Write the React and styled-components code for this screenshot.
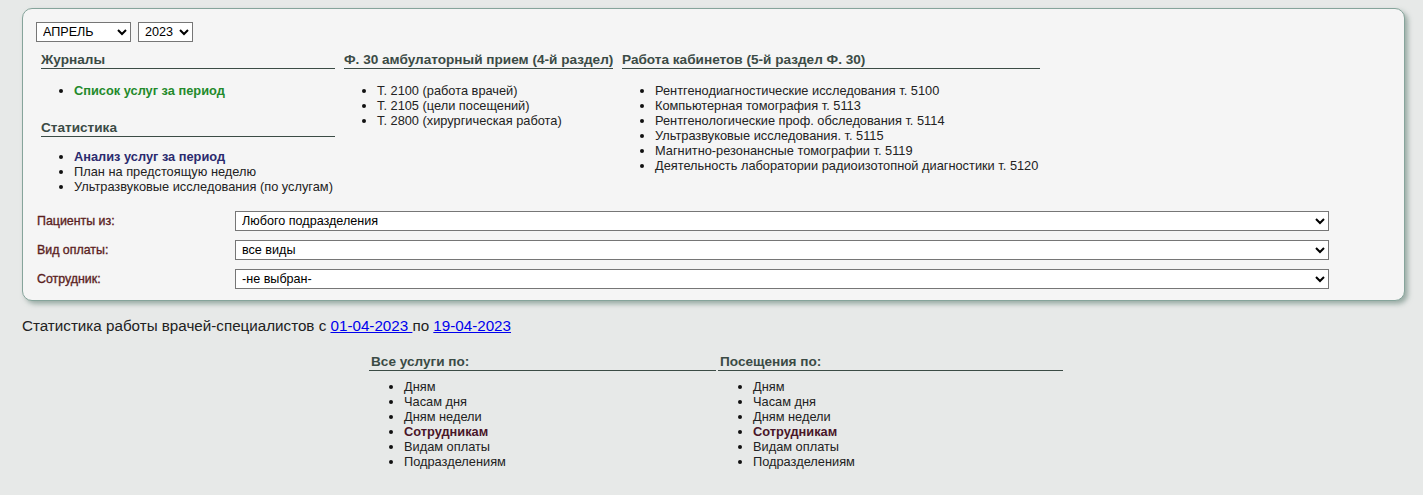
import styled, { createGlobalStyle } from "styled-components";

const GlobalStyle = createGlobalStyle`
  html, body {
    margin: 0;
    padding: 0;
    background: #e7e9e8;
    font-family: "Liberation Sans", Arial, sans-serif;
    font-size: 13px;
    color: #222;
  }
`;

//CSS
const Page = styled.div`
  padding: 8px 18px 20px 22px;
`;

const Panel = styled.div`
  background: #f5f5f5;
  border: 1px solid #86a49b;
  border-radius: 10px;
  box-shadow: 3px 3px 5px rgba(90, 120, 110, 0.55);
  padding: 13px 14px 11px 13px;
`;

const PeriodRow = styled.div`
  display: flex;
  gap: 7px;
`;

const Select = styled.select`
  font-family: "Liberation Sans", Arial, sans-serif;
  font-size: 12.6px;
  color: #000;
  height: 20px;
  width: ${(p) => p.$width || "auto"};
  padding: 0 2px;
  background: #fff;
  border: 1px solid #767676;
  border-radius: 0;
`;

const Sections = styled.div`
  display: grid;
  grid-template-columns: 294px 269px 418px;
  column-gap: 9px;
  margin: 9px 0 0 5px;
`;

const Column = styled.div`
  display: flex;
  flex-direction: column;
`;

const Heading = styled.div`
  font-weight: bold;
  font-size: 13.6px;
  color: #3b4b45;
  line-height: 15px;
  padding: 1px 0 1px ${(p) => p.$inset || "0"};
  border-bottom: 1px solid #3b4b45;
  white-space: nowrap;
  margin-top: ${(p) => p.$top || "0"};
`;

const List = styled.ul`
  margin: ${(p) => p.$gap || "14px"} 0 0;
  padding-left: ${(p) => p.$indent || "33px"};
  line-height: 15px;
  font-size: 12.8px;
  list-style: disc;
  li::marker {
    color: #111;
  }
`;

const Item = styled.li`
  white-space: nowrap;
  font-weight: ${(p) => (p.$bold ? "bold" : "normal")};
  color: ${(p) => p.$color || "#222"};
`;

const Filters = styled.div`
  display: grid;
  grid-template-columns: 198px 1094px;
  row-gap: 9px;
  align-items: center;
  margin: 17px 0 0 1px;
`;

const Label = styled.label`
  font-size: 12.4px;
  color: #5b1f1f;
  -webkit-text-stroke: 0.35px #5b1f1f;
`;

const Title = styled.div`
  margin-top: 16px;
  font-size: 15.2px;
  color: #222;
  a {
    color: #0000ee;
    text-decoration: underline;
  }
`;

const Reports = styled.div`
  display: grid;
  grid-template-columns: 347px 345px;
  column-gap: 2px;
  justify-content: center;
  padding-left: 5px;
  margin-top: 19px;
`;

const journals = [
  { text: "Список услуг за период", bold: true, color: "#238a2b" },
];

const Main = () => (
  <Page>
    <Panel>
      <PeriodRow>
        <Select $width="95px" defaultValue="4">
          <option value="1">ЯНВАРЬ</option>
          <option value="2">ФЕВРАЛЬ</option>
          <option value="3">МАРТ</option>
          <option value="4">АПРЕЛЬ</option>
          <option value="5">МАЙ</option>
        </Select>
        <Select $width="55px" defaultValue="2023">
          <option>2022</option>
          <option>2023</option>
        </Select>
      </PeriodRow>

      <Sections>
        <Column>
          <Heading>Журналы</Heading>
          <List>
            {journals.map((it) => (
              <Item key={it.text} $bold={it.bold} $color={it.color}>
                {it.text}
              </Item>
            ))}
          </List>
          <Heading $top="21px">Статистика</Heading>
          <List $gap="12px">
            <Item $bold $color="#2b2b6e">Анализ услуг за период</Item>
            <Item>План на предстоящую неделю</Item>
            <Item>Ультразвуковые исследования (по услугам)</Item>
          </List>
        </Column>
        <Column>
          <Heading>Ф. 30 амбулаторный прием (4-й раздел)</Heading>
          <List>
            <Item>Т. 2100 (работа врачей)</Item>
            <Item>Т. 2105 (цели посещений)</Item>
            <Item>Т. 2800 (хирургическая работа)</Item>
          </List>
        </Column>
        <Column>
          <Heading>Работа кабинетов (5-й раздел Ф. 30)</Heading>
          <List>
            <Item>Рентгенодиагностические исследования т. 5100</Item>
            <Item>Компьютерная томография т. 5113</Item>
            <Item>Рентгенологические проф. обследования т. 5114</Item>
            <Item>Ультразвуковые исследования. т. 5115</Item>
            <Item>Магнитно-резонансные томографии т. 5119</Item>
            <Item>Деятельность лаборатории радиоизотопной диагностики т. 5120</Item>
          </List>
        </Column>
      </Sections>

      <Filters>
        <Label>Пациенты из:</Label>
        <Select $width="1094px" defaultValue="any">
          <option value="any">Любого подразделения</option>
        </Select>
        <Label>Вид оплаты:</Label>
        <Select $width="1094px" defaultValue="all">
          <option value="all">все виды</option>
        </Select>
        <Label>Сотрудник:</Label>
        <Select $width="1094px" defaultValue="none">
          <option value="none">-не выбран-</option>
        </Select>
      </Filters>
    </Panel>

    <Title>
      Статистика работы врачей-специалистов с <a href="#">01-04-2023 </a>по{" "}
      <a href="#">19-04-2023</a>
    </Title>

    <Reports>
      {["Все услуги по:", "Посещения по:"].map((t) => (
        <Column key={t}>
          <Heading $inset="2px">{t}</Heading>
          <List $indent="35px" $gap="8px">
            <Item>Дням</Item>
            <Item>Часам дня</Item>
            <Item>Дням недели</Item>
            <Item $bold $color="#4a1628">Сотрудникам</Item>
            <Item>Видам оплаты</Item>
            <Item>Подразделениям</Item>
          </List>
        </Column>
      ))}
    </Reports>
  </Page>
);

export default function App() {
  return (
    <>
      <GlobalStyle />
      <Main />
    </>
  );
}
